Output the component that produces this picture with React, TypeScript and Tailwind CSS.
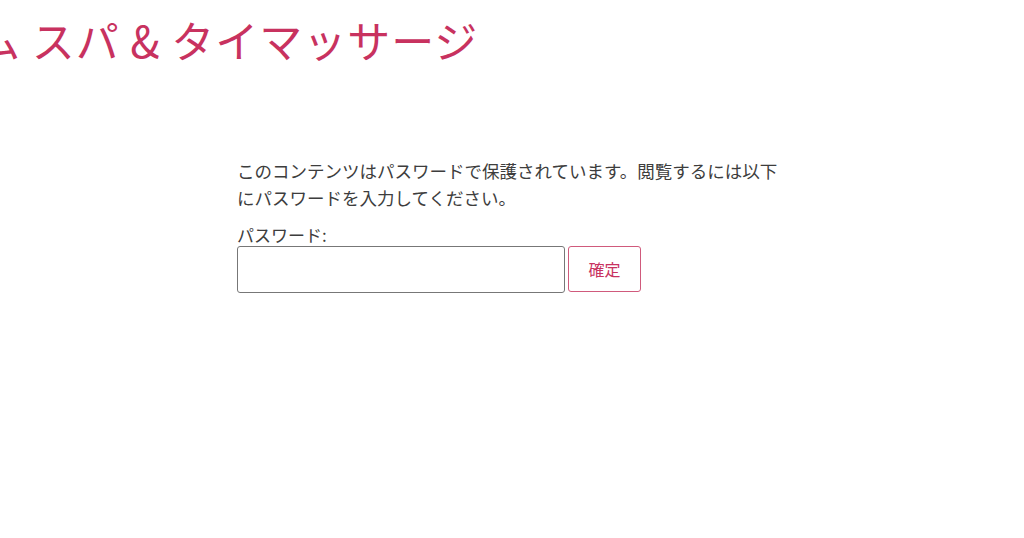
import React from "react"

export default function App() {
  return (
    <div className="w-[1024px] h-[538px] bg-white overflow-hidden font-['Noto_Sans_CJK_JP','Noto_Sans',sans-serif]">
      <header className="h-[157px] pt-[11px] overflow-hidden">
        <h1 className="ml-[-23px] text-[43px] leading-[56px] tracking-[1px] font-normal text-[#c8325f] whitespace-nowrap">
          ム スパ &amp; タイマッサージ
        </h1>
      </header>

      <main className="pl-[237px]">
        <form className="w-[550px]" onSubmit={(e) => e.preventDefault()}>
          <p className="text-[17.5px] leading-[27px] text-[#3d3d3d]">
            このコンテンツはパスワードで保護されています。閲覧するには以下にパスワードを入力してください。
          </p>
          <label className="block mt-[14px] text-[17px] leading-[20px] text-[#3d3d3d]">
            パスワード:
          </label>
          <div className="flex gap-[3px] mt-[1px]">
            <input
              type="password"
              className="w-[328px] h-[47px] border border-[#777] rounded-[3px] px-2 outline-none"
            />
            <button
              type="submit"
              className="w-[73px] h-[46px] border border-[#d05a7c] rounded-[3px] text-[16px] text-[#c8325f] bg-white"
            >
              確定
            </button>
          </div>
        </form>
      </main>
    </div>
  )
}
